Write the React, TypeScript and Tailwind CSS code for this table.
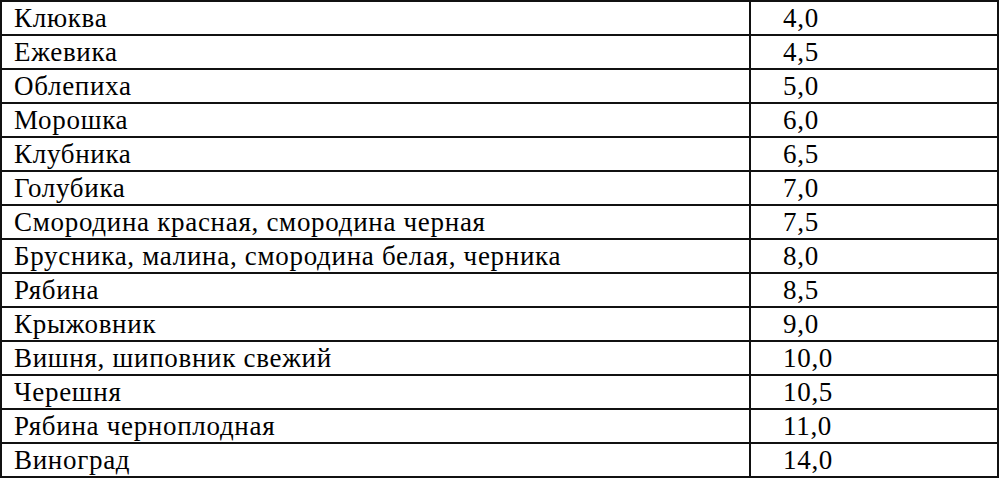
const rows: [string, string][] = [
  ['Клюква', '4,0'],
  ['Ежевика', '4,5'],
  ['Облепиха', '5,0'],
  ['Морошка', '6,0'],
  ['Клубника', '6,5'],
  ['Голубика', '7,0'],
  ['Смородина красная, смородина черная', '7,5'],
  ['Брусника, малина, смородина белая, черника', '8,0'],
  ['Рябина', '8,5'],
  ['Крыжовник', '9,0'],
  ['Вишня, шиповник свежий', '10,0'],
  ['Черешня', '10,5'],
  ['Рябина черноплодная', '11,0'],
  ['Виноград', '14,0'],
]

export default function App() {
  return (
    <div className="h-[478px] w-[1000px] overflow-hidden bg-white font-['Liberation_Serif','Times_New_Roman',serif]">
      <table className="w-[999px] border-collapse text-[27px] leading-none tracking-[0.7px] text-black">
        <tbody>
          {rows.map(([name, value]) => (
            <tr key={name} className="h-[34px]">
              <td className="w-[749px] border-2 border-[#111] pl-3 align-middle">{name}</td>
              <td className="border-2 border-[#111] pl-8 align-middle">{value}</td>
            </tr>
          ))}
        </tbody>
      </table>
    </div>
  )
}
